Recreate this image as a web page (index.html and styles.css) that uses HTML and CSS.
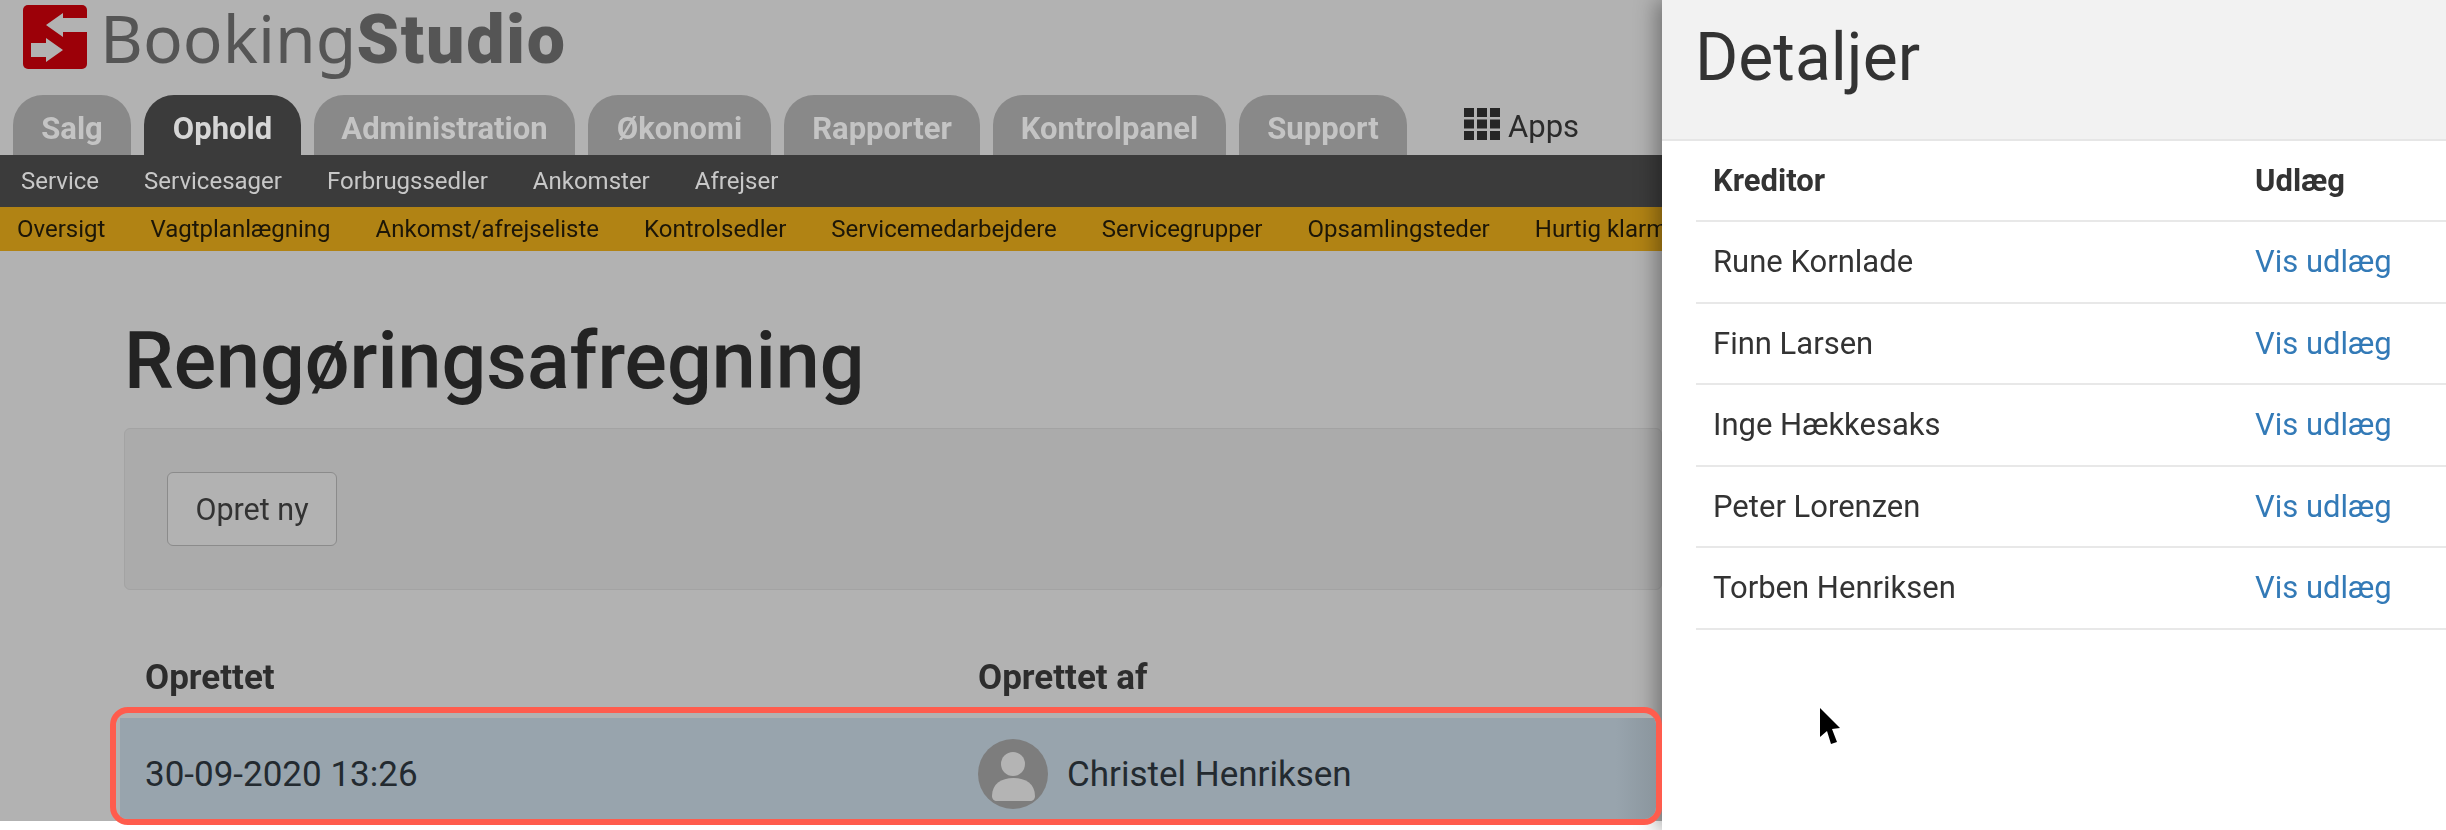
FILE: index.html
```html
<!DOCTYPE html>
<html lang="en">
<head>
    <meta charset="UTF-8">
    <meta name="viewport" content="width=device-width, initial-scale=1.0">
    <title>Rengoringsafregning</title>
    <link rel="stylesheet" href="styles.css">
</head>
<body>
<div class="layout">
  <main class="page">
    <header class="logo">
      <svg class="logo-mark" viewBox="0 0 64 64" aria-hidden="true">
        <rect width="64" height="64" rx="5" fill="#9c0008"/>
        <path d="M23 20L40 8V13H64V27H40V32Z" fill="#b2b2b2"/>
        <path d="M8 38H23V33L40 45L23 57V52H8Z" fill="#b2b2b2"/>
      </svg>
      <span class="logo-text">Booking<b>Studio</b></span>
    </header>

    <nav class="tabs">
      <a class="tab tab-salg">Salg</a>
      <a class="tab tab-ophold active">Ophold</a>
      <a class="tab tab-admin">Administration</a>
      <a class="tab tab-okonomi">Økonomi</a>
      <a class="tab tab-rapporter">Rapporter</a>
      <a class="tab tab-kontrol">Kontrolpanel</a>
      <a class="tab tab-support">Support</a>
      <a class="apps">
        <svg class="apps-icon" viewBox="0 0 36 32" aria-hidden="true">
          <path d="M0 0h10v9H0zM13 0h10v9H13zM26 0h10v9H26zM0 11.500h10v9H0zM13 11.500h10v9H13zM26 11.500h10v9H26zM0 23h10v9H0zM13 23h10v9H13zM26 23h10v9H26z" fill="#262626"/>
        </svg>
        Apps
      </a>
    </nav>

    <nav class="subnav">
      <a>Service</a>
      <a>Servicesager</a>
      <a>Forbrugssedler</a>
      <a>Ankomster</a>
      <a>Afrejser</a>
    </nav>

    <nav class="subsubnav">
      <a>Oversigt</a>
      <a>Vagtplanlægning</a>
      <a>Ankomst/afrejseliste</a>
      <a>Kontrolsedler</a>
      <a>Servicemedarbejdere</a>
      <a>Servicegrupper</a>
      <a>Opsamlingsteder</a>
      <a>Hurtig klarmelding</a>
    </nav>

    <section class="content">
      <h1 class="page-title">Rengøringsafregning</h1>
      <div class="well">
        <button class="btn">Opret ny</button>
      </div>

      <div class="list-head">
        <span class="col-date">Oprettet</span>
        <span>Oprettet af</span>
      </div>
      <div class="list-row">
        <div class="list-row-inner">
          <span class="col-date">30-09-2020 13:26</span>
          <span class="person">
            <svg class="avatar" viewBox="0 0 70 70" aria-hidden="true">
              <circle cx="35" cy="35" r="35" fill="#7d7d7d"/>
              <circle cx="35" cy="25" r="12" fill="#b4b4b4"/>
              <path d="M14 57C14 45 23 39 35.500 39S57 45 57 57C57 60 55 62 52 62H19C16 62 14 60 14 57Z" fill="#b4b4b4"/>
            </svg>
            Christel Henriksen
          </span>
        </div>
      </div>
    </section>
  </main>

  <aside class="details">
    <h2 class="details-title">Detaljer</h2>
    <table class="details-table">
      <thead>
        <tr><th>Kreditor</th><th class="col-link">Udlæg</th></tr>
      </thead>
      <tbody>
        <tr><td>Rune Kornlade</td><td class="col-link"><a>Vis udlæg</a></td></tr>
        <tr><td>Finn Larsen</td><td class="col-link"><a>Vis udlæg</a></td></tr>
        <tr><td>Inge Hækkesaks</td><td class="col-link"><a>Vis udlæg</a></td></tr>
        <tr><td>Peter Lorenzen</td><td class="col-link"><a>Vis udlæg</a></td></tr>
        <tr><td>Torben Henriksen</td><td class="col-link"><a>Vis udlæg</a></td></tr>
      </tbody>
    </table>
    <svg class="cursor" viewBox="0 0 20 36" aria-hidden="true">
      <path d="M0 0L20 20L12 21L17 34L11 36L7 23L0 29Z" fill="#000"/>
    </svg>
  </aside>
</div>
</body>
</html>
```
FILE: styles.css
```css
* {
  box-sizing: border-box;
  margin: 0;
  padding: 0;
}

html, body {
  height: 100%;
  overflow: hidden;
}

body {
  font-family: Roboto, Arial, sans-serif;
  color: #262626;
  background-color: #fff;
}

.layout {
  display: flex;
  height: 830px;
  filter: blur(0.6px); /* the screenshot is an upscaled capture */
}

/* Dimmed page behind the panel */

.page {
  width: 1662px;
  height: 821px;
  flex-shrink: 0;
  background-color: #b2b2b2;
}

.logo {
  display: flex;
  align-items: flex-start;
  height: 95px;
  padding: 5px 0 0 23px;
}

.logo-mark {
  width: 64px;
  height: 64px;
  margin-right: 13px;
}

.logo-text {
  font-family: "Noto Sans", Roboto, sans-serif;
  font-size: 66px;
  line-height: 64px;
  color: #555;
}

.logo-text b {
  font-family: Roboto, sans-serif;
  font-size: 68px;
  font-weight: 900;
  letter-spacing: 1.800px;
}

.tabs {
  display: flex;
  height: 60px;
  padding-left: 13px;
}

.tab {
  display: flex;
  justify-content: center;
  padding-top: 15px;
  font-size: 31px;
  font-weight: 700;
  color: #c4c4c4;
  background-color: #898989;
  border-radius: 30px 30px 0 0;
  margin-right: 13px;
}

.tab-salg { width: 118px; }
.tab-ophold { width: 157px; }
.tab-admin { width: 261px; }
.tab-okonomi { width: 183px; }
.tab-rapporter { width: 196px; }
.tab-kontrol { width: 233px; }
.tab-support { width: 168px; margin-right: 57px; }

.tab.active {
  color: #d6d6d6;
  background-color: #3b3b3b;
}

.apps {
  display: flex;
  align-items: flex-start;
  gap: 8px;
  padding-top: 13px;
  font-size: 31px;
  color: #2b2b2b;
}

.apps-icon {
  width: 36px;
  height: 32px;
}

.subnav {
  display: flex;
  align-items: center;
  gap: 45px;
  height: 52px;
  padding-left: 21px;
  font-size: 24px;
  color: #c8c8c8;
  background-color: #3b3b3b;
}

.subsubnav {
  display: flex;
  align-items: center;
  gap: 45px;
  height: 44px;
  padding-left: 17px;
  font-size: 24px;
  color: #1c1608;
  white-space: nowrap;
  background-color: #b18314;
}

.content {
  padding: 0 0 0 124px;
}

.page-title {
  margin-top: 64px;
  font-size: 79px;
  line-height: 92px;
  font-weight: 500;
  color: #232323;
}

.well {
  height: 162px;
  margin-top: 21px;
  padding: 43px 42px;
  background-color: #ababab;
  border: 1px solid #a3a3a3;
  border-radius: 6px;
}

.btn {
  width: 170px;
  height: 74px;
  font-family: inherit;
  font-size: 30.500px;
  color: #333;
  background-color: #b2b2b2;
  border: 1px solid #8b8b8b;
  border-radius: 6px;
}

/* Table on the page */

.list-head {
  display: flex;
  height: 117px;
  padding: 67px 0 0 21px;
  font-size: 35px;
  font-weight: 700;
  color: #2d2d2d;
}

.col-date {
  width: 833px;
}

.list-row {
  position: relative;
  z-index: 1;
  height: 118px;
  margin-left: -14px;
  padding: 5px 0 0 4px;
  background-color: #b2b2b2;
  border: 6px solid #ff5c4d;
  border-radius: 18px;
  overflow: hidden;
}

.list-row-inner {
  display: flex;
  align-items: center;
  height: 100%;
  padding: 11px 0 0 25px;
  font-size: 35px;
  color: #232a30;
  background: linear-gradient(to right, #98a4ad calc(100% - 40px), #8b969e);
}

.person {
  display: flex;
  align-items: center;
  gap: 19px;
}

.avatar {
  width: 70px;
  height: 70px;
}

/* Details panel */

.details {
  position: relative;
  flex: 1;
  background-color: #fff;
  box-shadow: -6px 0 20px rgba(0, 0, 0, 0.35);
}

.details-title {
  height: 141px;
  padding: 22px 0 0 33px;
  font-size: 66px;
  line-height: 72px;
  font-weight: 400;
  color: #333;
  background-color: #f2f2f2;
  border-bottom: 2px solid #e6e6e6;
}

.details-table {
  width: 750px;
  margin-left: 34px;
  border-collapse: collapse;
  font-size: 31px;
  color: #333;
}

.details-table th,
.details-table td {
  height: 81.500px;
  padding-left: 17px;
  text-align: left;
  border-bottom: 2px solid #e8e8e8;
}

.details-table th {
  height: 80px;
  font-weight: 700;
}

.col-link {
  width: 208px;
}

.col-link a {
  color: #337ab7;
}

.cursor {
  position: absolute;
  left: 158px;
  top: 708px;
  width: 20px;
  height: 36px;
}
```
